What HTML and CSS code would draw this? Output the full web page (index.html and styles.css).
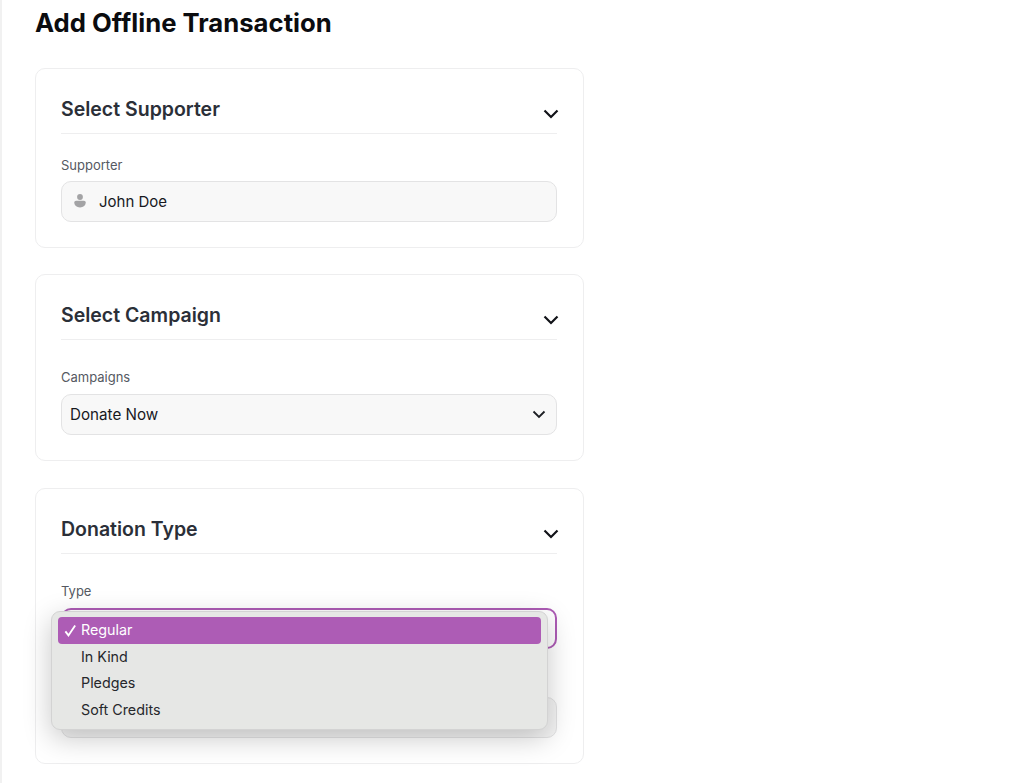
FILE: index.html
```html
<!DOCTYPE html>
<html lang="en">
<head>
    <meta charset="UTF-8">
    <meta name="viewport" content="width=device-width, initial-scale=1.0">
    <title>Add Offline Transaction</title>
    <link rel="stylesheet" href="styles.css">
</head>
<body>
    <main class="page">
        <h1 class="page-title">Add Offline Transaction</h1>

        <section class="card card-supporter">
            <div class="card-header">
                <h2>Select Supporter</h2>
                <svg class="header-chevron" viewBox="0 0 16 10"><path d="M1.5 1.5L8 8l6.5-6.5"/></svg>
            </div>
            <label class="field-label">Supporter</label>
            <div class="input">
                <svg class="user-icon" viewBox="0 0 12 14"><circle cx="6" cy="3" r="2.9"/><path d="M.3 8.600c0-1 .8-1.800 1.800-1.800h7.800c1 0 1.800.8 1.800 1.800 0 2.900-2.300 4.900-5.700 4.900S.3 11.500.3 8.600z"/></svg>
                <span>John Doe</span>
            </div>
        </section>

        <section class="card">
            <div class="card-header">
                <h2>Select Campaign</h2>
                <svg class="header-chevron" viewBox="0 0 16 10"><path d="M1.5 1.5L8 8l6.5-6.5"/></svg>
            </div>
            <label class="field-label">Campaigns</label>
            <div class="input select">
                <span>Donate Now</span>
                <svg class="select-chevron" viewBox="0 0 14 9"><path d="M1.5 1.5L7 7l5.5-5.5"/></svg>
            </div>
        </section>

        <section class="card">
            <div class="card-header">
                <h2>Donation Type</h2>
                <svg class="header-chevron" viewBox="0 0 16 10"><path d="M1.5 1.5L8 8l6.5-6.5"/></svg>
            </div>
            <label class="field-label">Type</label>
            <div class="type-field">
                <div class="input select focused"></div>
                <ul class="menu">
                    <li class="menu-item selected">
                        <svg class="check" viewBox="0 0 14 14"><path d="M1.500 8l3.300 4.300L12 1.500"/></svg>
                        Regular
                    </li>
                    <li class="menu-item">In Kind</li>
                    <li class="menu-item">Pledges</li>
                    <li class="menu-item">Soft Credits</li>
                </ul>
            </div>
            <div class="input second-input"></div>
        </section>
    </main>
</body>
</html>
```

FILE: styles.css
```css
* {
    box-sizing: border-box;
}
body {
    margin: 0;
    height: 783px;
    overflow: hidden;
    background: white;
    font-family: 'Inter', sans-serif;
    color: #15171c;
}
.page {
    height: 783px;
    padding: 8px 0 0 33px;
    border-left: 2px solid #f1f1f1;
}
.page-title {
    margin: 0 0 30px;
    font-size: 25.7px;
    line-height: 30px;
    font-weight: 700;
    color: #0b0c0f;
}
.card {
    width: 549px;
    padding: 24px 26px 25px 25px;
    margin-bottom: 27px;
    background: white;
    border: 1px solid #eeeeef;
    border-radius: 10px;
}
.card-header {
    display: flex;
    justify-content: space-between;
    align-items: flex-start;
    height: 41px;
    border-bottom: 1px solid #eeeeef;
    margin-bottom: 29px;
}
.card-header h2 {
    margin: 0;
    font-size: 19.5px;
    line-height: 32px;
    font-weight: 600;
    color: #2b2f38;
}
.header-chevron {
    width: 16px;
    height: 10px;
    margin: 16px -2px 0 0;
    fill: none;
    stroke: #111318;
    stroke-width: 2.2;
}
.field-label {
    display: block;
    font-size: 13px;
    line-height: 16px;
    color: #555962;
    margin-bottom: 9px;
}
.card-supporter {
    margin-bottom: 26.5px;
}
.card-supporter .card-header {
    margin-bottom: 23px;
}
.card-supporter .field-label {
    margin-bottom: 8px;
}
.input {
    display: flex;
    align-items: center;
    height: 40.5px;
    padding: 0 8px;
    background: #f8f8f8;
    border: 1px solid #e3e3e4;
    border-radius: 10px;
    font-size: 15px;
    color: #17191e;
}
.select {
    height: 41px;
    justify-content: space-between;
    padding-right: 10px;
    font-size: 15.2px;
}
.select-chevron {
    width: 14px;
    height: 9px;
    fill: none;
    stroke: #1c1e23;
    stroke-width: 1.8;
}
.user-icon {
    width: 12px;
    height: 14px;
    margin: 0 13px 0 4px;
    fill: #a3a3a5;
}
.type-field {
    position: relative;
}
.focused {
    background: white;
    border: 2px solid #ad5cb5;
}
.second-input {
    height: 41px;
    margin-top: 48px;
    background: #f4f4f4;
}
.menu {
    position: absolute;
    left: -10px;
    top: 3px;
    width: 497px;
    height: 119px;
    margin: 0;
    padding: 5px 6px;
    list-style: none;
    background: #e6e7e5;
    border: 1px solid #d3d3d3;
    border-radius: 9px;
    box-shadow: 0 8px 28px rgba(0, 0, 0, 0.22);
}
.menu-item {
    position: relative;
    height: 26.5px;
    line-height: 26.5px;
    padding-left: 23px;
    border-radius: 4px;
    font-size: 14.3px;
    color: #26282c;
}
.menu-item.selected {
    background: #ad5cb5;
    color: white;
}
.check {
    position: absolute;
    left: 6px;
    top: 7px;
    width: 13px;
    height: 13px;
    fill: none;
    stroke: white;
    stroke-width: 2;
}
```
